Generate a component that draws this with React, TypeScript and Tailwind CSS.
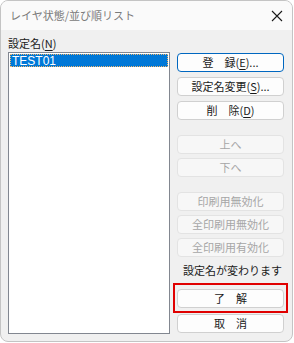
import React from 'react'

const jp = '"Noto Sans CJK JP", "Noto Sans", sans-serif'

type BtnProps = {
  children: React.ReactNode
  disabled?: boolean
  primary?: boolean
  className?: string
}

function Btn({ children, disabled, primary, className = '' }: BtnProps) {
  const tone = disabled
    ? 'border-[#e3e3e3] bg-[#f7f7f7] text-[#a6a6a6]'
    : primary
      ? 'border-[#0067c0] bg-[#fdfdfd] text-[#1a1a1a]'
      : 'border-[#d0d0d0] bg-[#fdfdfd] text-[#1a1a1a]'
  return (
    <div
      className={`flex h-[19px] w-[107px] items-center justify-center rounded-[4px] border text-[11px] leading-none ${tone} ${className}`}
    >
      {children}
    </div>
  )
}

const U = ({ c }: { c: string }) => <span className="underline underline-offset-2">{c}</span>

export default function App() {
  return (
    <div className="h-[343px] w-[294px] bg-white" style={{ fontFamily: jp }}>
      <div className="flex h-[342px] w-[293px] flex-col overflow-hidden rounded-[8px] border border-[#c4c4c4] bg-[#f0f0f0]">
        {/* title bar */}
        <div className="flex h-[29px] shrink-0 items-center justify-between bg-[#fafafa] pl-[9px] pr-[5px]">
          <span className="text-[11px] text-[#7a7a7a]">レイヤ状態/並び順リスト</span>
          <svg width="12" height="12" viewBox="0 0 12 12" className="mr-[4px]">
            <path d="M1 1 L11 11 M11 1 L1 11" stroke="#1a1a1a" strokeWidth="1.1" />
          </svg>
        </div>

        <div className="flex pl-[7px]">
          {/* left column */}
          <div className="flex w-[162px] flex-col">
            <div className="mt-[6px] h-[14px] text-[11px] leading-[14px] text-[#1a1a1a]">
              設定名(<U c="N" />)
            </div>
            <div className="mt-[2px] h-[282px] border border-[#828790] bg-white p-[1px]">
              <div
                className="flex h-[13px] items-center border border-dotted border-[#f2b56b] bg-[#0078d7] pl-[1px] text-[12px] leading-none text-white"
                style={{ fontFamily: '"Liberation Sans", sans-serif' }}
              >
                TEST01
              </div>
            </div>
          </div>

          {/* right column */}
          <div className="ml-[7px] flex w-[107px] flex-col">
            <Btn primary className="mt-[23px]">
              登　録(<U c="E" />)...
            </Btn>
            <Btn className="mt-[5px]">
              設定名変更(<U c="S" />)...
            </Btn>
            <Btn className="mt-[5px]">
              削　除(<U c="D" />)
            </Btn>
            <Btn disabled className="mt-[15px]">
              上へ
            </Btn>
            <Btn disabled className="mt-[4px]">
              下へ
            </Btn>
            <Btn disabled className="mt-[15px]">
              印刷用無効化
            </Btn>
            <Btn disabled className="mt-[4px]">
              全印刷用無効化
            </Btn>
            <Btn disabled className="mt-[4px]">
              全印刷用有効化
            </Btn>
            <div className="mt-[4px] flex h-[18px] items-center whitespace-nowrap pl-[6px] text-[11px] text-[#1a1a1a]">
              設定名が変わります
            </div>
            <div className="relative mt-[10px] w-[107px]">
              <Btn>了　解</Btn>
              <div className="pointer-events-none absolute -bottom-[5px] -left-[4px] -right-[4px] -top-[6px] border-2 border-[#e00000]" />
            </div>
            <Btn className="mt-[6px]">取　消</Btn>
          </div>
        </div>
      </div>
    </div>
  )
}
